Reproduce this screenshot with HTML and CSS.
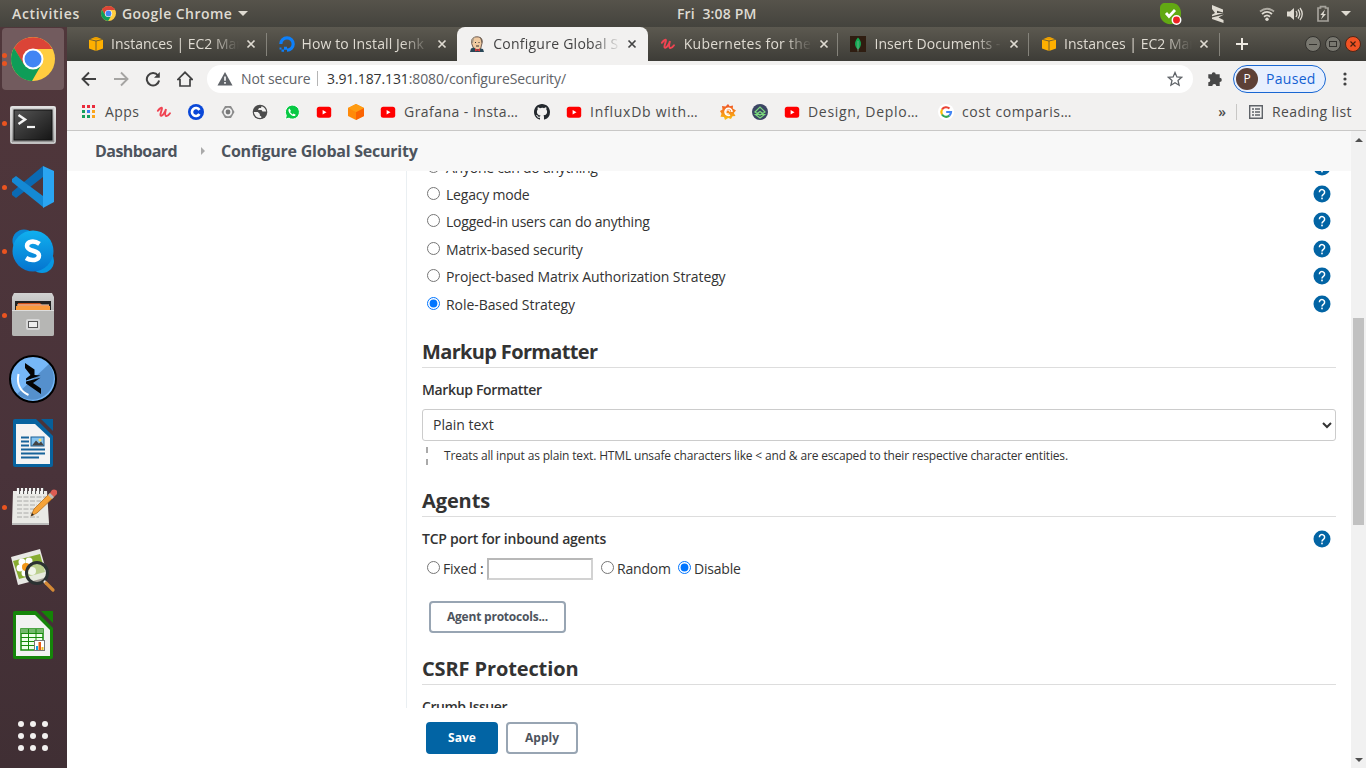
FILE: index.html
```html
<!DOCTYPE html>
<html lang="en">
<head>
<meta charset="utf-8">
<title>Configure Global Security</title>
<link rel="stylesheet" href="styles.css">
</head>
<body>
<svg class="defs" width="0" height="0" aria-hidden="true">
  <defs>
    <linearGradient id="gray" x1="0" y1="0" x2="0" y2="1"><stop offset="0" stop-color="#d2d2d2"/><stop offset="1" stop-color="#8f8f8f"/></linearGradient>
    <linearGradient id="dark" x1="0" y1="0" x2="1" y2="1"><stop offset="0" stop-color="#555"/><stop offset="1" stop-color="#151515"/></linearGradient>
    <linearGradient id="skype" x1="0" y1="0" x2="0" y2="1"><stop offset="0" stop-color="#10b0ef"/><stop offset="1" stop-color="#0574cf"/></linearGradient>
    <linearGradient id="graf" x1="0" y1="0" x2="0" y2="1"><stop offset="0" stop-color="#f04e28"/><stop offset="1" stop-color="#fbc211"/></linearGradient>
    <symbol id="chrome" viewBox="0 0 44 44">
      <circle cx="22" cy="22" r="22" fill="#ffcd40"/>
      <path d="M3 11A22 22 0 0 1 41.300 12H22L12.500 27.500Z" fill="#db4437"/>
      <path d="M3 11A22 22 0 0 0 21 44L30.500 27.500L22 32L13 27.500Z" fill="#0f9d58"/>
      <circle cx="22" cy="22" r="10.500" fill="#fff"/><circle cx="22" cy="22" r="8.500" fill="#4285f4"/>
    </symbol>
    <symbol id="aws" viewBox="0 0 16 16"><path d="M1 3.500L8 1l7 2.500v9L8 15l-7-2.500z" fill="#ffb000"/><path d="M1 3.300L8 5l7-1.700M8 5v10" stroke="#534d3c" stroke-width=".8" fill="none"/><path d="M4 2.300L8 3.500l4-1.200L8 1z" fill="#e79b00"/></symbol>
    <symbol id="udemy" viewBox="0 0 16 16"><path d="M1.800 6.800C3.200 5.200 4.500 3.800 5.600 3.800 7 4 3.800 9.500 4.500 11.300 5.500 13 9 9 10 5c-1 4-1.300 6.500 0 7 1.200.3 2.800-1 4-2.800" stroke="#f04452" stroke-width="1.900" fill="none" stroke-linecap="round"/></symbol>
    <symbol id="yt" viewBox="0 0 16 16"><rect x=".8" y="2.700" width="14.400" height="11" rx="2.500" fill="#f00"/><path d="M6.600 6v4.400L10.500 8.200z" fill="#fff"/></symbol>
    <symbol id="help" viewBox="0 0 18 18"><circle cx="9" cy="9" r="8.500" fill="#0264a4"/><path d="M6.400 7.200a2.600 2.600 0 1 1 4.200 2C9.500 10 9 10.300 9 11.400" stroke="#fff" stroke-width="1.500" fill="none"/><rect x="8.200" y="12.600" width="1.600" height="1.700" fill="#fff"/></symbol>
    <symbol id="x" viewBox="0 0 10 10"><path d="M1.500 1.500l7 7m0-7l-7 7" stroke="currentColor" stroke-width="1.700"/></symbol>
  </defs>
</svg>

<div class="desktop">
  <header class="topbar">
    <span class="activities">Activities</span>
    <svg class="app-icon"><use href="#chrome"/></svg>
    <span class="app-name">Google Chrome</span>
    <i class="caret"></i>
    <span class="clock">Fri&nbsp; 3:08 PM</span>
    <div class="tray">
      <svg width="24" height="24" viewBox="0 0 24 24"><path d="M6 1h7c5 0 9 4 9 10 0 7-4 11-9 11C6 23 1 18 1 12V6c0-3 2-5 5-5z" fill="#62a913"/><path d="M7 11l3 3.500L16 8" stroke="#fff" stroke-width="2.800" fill="none"/><circle cx="17.500" cy="18" r="4.200" fill="#ed2224" stroke="#fff" stroke-width="1.500"/></svg>
      <svg class="tray-z" width="14" height="20" viewBox="0 0 14 20"><path d="M1 1l11 4.500v3L6 6.700v2.300L12.500 9 1 12.200v-1.500l3-1.800L1 5zM13 10.500L7.500 13.500 12.500 16v3L1 15v-1.500z" fill="#dfdbd2"/></svg>
      <svg class="tray-wifi" width="16" height="16" viewBox="0 0 16 16"><g stroke="#dfdbd2" stroke-width="1.800" fill="none"><path d="M1 5.500q7-5.600 14 0" opacity=".65"/><path d="M3 8q5-4.200 10 0M5 10.700q3-2.600 6 0"/></g><circle cx="8" cy="13.200" r="1.700" fill="#dfdbd2"/></svg>
      <svg class="tray-vol" width="16" height="16" viewBox="0 0 16 16"><path d="M0 5.500h3L7 2v12L3 10.500H0z" fill="#dfdbd2"/><path d="M9 5q2 3 0 6M11 3.500q3.500 4.500 0 9M13 2q4.500 6 0 12" stroke="#dfdbd2" stroke-width="1.300" fill="none"/></svg>
      <svg class="tray-bat" width="12" height="18" viewBox="0 0 12 18"><path d="M3.500 3V1.700h5V3H11v13H1V3z" stroke="#a5a29b" stroke-width="1.700" fill="none"/><path d="M8 4.500L3.300 10h2.400L4 14.500 9 9H6.500z" fill="#dfdbd2"/></svg>
      <i class="caret"></i>
    </div>
  </header>

  <div class="workspace">
    <nav class="dock">
      <div class="slot active"><span class="pips two"><i></i><i></i></span><svg width="44" height="44"><use href="#chrome"/></svg></div>
      <div class="slot"><span class="pips"><i></i></span><svg width="46" height="48" viewBox="0 0 46 48"><rect x="0" y="7" width="46" height="38" rx="2" fill="url(#gray)"/><rect x="1" y="8" width="44" height="36" rx="1.500" fill="none" stroke="#f1f1f1"/><rect x="4" y="11" width="38" height="30" fill="url(#dark)" stroke="#111"/><path d="M8.500 16l6.500 4.500-6.500 4.500" stroke="#f4f4f4" stroke-width="2.500" fill="none"/><path d="M17 28h8" stroke="#f4f4f4" stroke-width="2.200"/></svg></div>
      <div class="slot"><span class="pips"><i></i></span><svg width="46" height="48" viewBox="0 0 46 48"><path d="M2 32l4 3L33 14V3L2 29z" fill="#0a6ab3"/><path d="M2 16l4-3 27 20v11L2 19z" fill="#1489d4"/><path d="M33 3l11 5v31l-11 6z" fill="#2aa5f2"/></svg></div>
      <div class="slot"><span class="pips"><i></i></span><svg width="46" height="48" viewBox="0 0 46 48"><circle cx="14" cy="14" r="11.500" fill="#0a87d5"/><circle cx="32" cy="34" r="12" fill="#0797e2"/><circle cx="23" cy="24" r="20.500" fill="url(#skype)"/><path d="M29.500 16.800C24 13 17 14.200 17 19c0 6 12 3.500 12 9.500 0 5-7.500 6-13 2.500" stroke="#fff" stroke-width="4.500" fill="none"/></svg></div>
      <div class="slot"><span class="pips"><i></i></span><svg width="46" height="48" viewBox="0 0 46 48"><path d="M4 2h38l2 4v37q0 2-2 2H4q-2 0-2-2V6z" fill="url(#gray)"/><rect x="5" y="10" width="36" height="10" fill="#222"/><path d="M8 12h22l2 2h7v6H7z" fill="#cf4e17"/><path d="M6 15h34v5H6z" fill="#f99a3c"/><path d="M7 14h32" stroke="#ffe8c8"/><path d="M2 19h42v24q0 2-2 2H4q-2 0-2-2z" fill="#b6b6b4"/><path d="M2 19.500h42" stroke="#ddd"/><rect x="16" y="28" width="14" height="11" rx="2" fill="#d8d8d8"/><rect x="18.500" y="30.500" width="9" height="6" fill="#eee" stroke="#555"/></svg></div>
      <div class="slot"><svg width="48" height="48" viewBox="0 0 48 48"><circle cx="24" cy="24" r="23" fill="#76b7f7"/><path d="M40 9A22 22 0 0 1 8 39z" fill="#5590cd"/><circle cx="24" cy="24" r="23" fill="none" stroke="#000" stroke-width="2"/><path d="M16 8L25.500 14.500V20L31.500 20.500 17 25.500V23.500L21.500 20 16 13zM31.500 22.700L24 28 32 33.500V39L17 28.500V26.500z" fill="#050505"/><path d="M9.500 19q-3 15 10 21" stroke="#fff" stroke-width="2" fill="none"/></svg></div>
      <div class="slot"><svg width="40" height="48" viewBox="0 0 40 48"><path d="M2 0h21l17 17v29q0 2-2 2H2q-2 0-2-2V2q0-2 2-2z" fill="#07639f"/><path d="M28 0h12v12z" fill="#075f99"/><path d="M3 5h19l15 14v26H3z" fill="#f4f4f4"/><path d="M8 18.500h8M8 22.500h8M8 26.500h8M8 30.500h24M8 34.500h24M8 38.500h18" stroke="#17639a" stroke-width="2"/><rect x="18" y="18" width="13" height="9" fill="#85c3ef" stroke="#165f95"/><path d="M19 26.500l4-5 3 3 2-2 3 4z" fill="#444"/><circle cx="27" cy="21" r="1.500" fill="#ffde66"/></svg></div>
      <div class="slot"><span class="pips"><i></i></span><svg width="48" height="48" viewBox="0 0 48 48"><path d="M4 8h34l2 32-37 1z" fill="#e9e9e5"/><path d="M3 40h37v2H3z" fill="#bbb"/><path d="M8 14h29M8 18h24M8 22h20M8 26h22M8 30h16M8 34h22" stroke="#999" stroke-width=".8" stroke-dasharray="5 1.500"/><path d="M9 5v6M13 5v6M17 5v6M21 5v6M25 5v6M29 5v6M33 5v6" stroke="#f5f5f5" stroke-width="2.200"/><path d="M10.500 5v6M14.500 5v6M18.500 5v6M22.500 5v6M26.500 5v6M30.500 5v6M34.500 5v6" stroke="#555"/><path d="M22 33l3-7L41 10l4 4-17 16z" fill="#f6a338" stroke="#a96416" stroke-width=".7"/><path d="M41 10l4 4 3-3q1-3-1-4-2-1-4 0z" fill="#dc5c53"/><path d="M39 12l4 4 2-2-4-4z" fill="#bbb"/><path d="M22 33l1-3 2 2z" fill="#222"/></svg></div>
      <div class="slot"><svg width="48" height="48" viewBox="0 0 48 48"><path d="M2 10L31 2l8 28L9 38z" fill="#e8e8e4"/><path d="M4 14l27-7 5 18-26 7z" fill="#87ac31"/><g fill="#fff"><circle cx="13" cy="15" r="3.500"/><circle cx="20" cy="14" r="3.500"/><circle cx="11" cy="21" r="3.500"/><circle cx="16" cy="26" r="3.500"/><circle cx="23" cy="24" r="4"/></g><circle cx="17" cy="20" r="4" fill="#f29618"/><circle cx="28" cy="26" r="10.500" fill="#e5ecd9" fill-opacity=".55" stroke="#2c3232" stroke-width="3"/><path d="M35 34l2 2" stroke="#eee" stroke-width="2.500"/><path d="M37 36l7 7" stroke="#d48a36" stroke-width="3.200" stroke-linecap="round"/></svg></div>
      <div class="slot"><svg width="40" height="48" viewBox="0 0 40 48"><path d="M2 0h21l17 17v29q0 2-2 2H2q-2 0-2-2V2q0-2 2-2z" fill="#15850a"/><path d="M28 0h12v12z" fill="#148407"/><path d="M3 4h19l15 15v26H3z" fill="#f2f2f2"/><rect x="8" y="18" width="22" height="21" fill="#edffe9" stroke="#168b0b" stroke-width="1.500"/><path d="M8 18h22v4H8z" fill="#73b96c"/><path d="M15.500 18v21M23 18v21M8 22.500h22M8 26.500h22M8 30.500h22M8 34.500h22" stroke="#168b0b"/><rect x="21.500" y="29.500" width="10" height="10" fill="#fff" stroke="#777"/><path d="M23 39v-4h2v4z" fill="#0aa0e5"/><path d="M25.500 39v-8h2.500v8z" fill="#e85a14"/><path d="M28.500 39v-3h2v3z" fill="#e9bc24"/></svg></div>
      <div class="apps-grid"><i></i><i></i><i></i><i></i><i></i><i></i><i></i><i></i><i></i></div>
    </nav>

    <section class="browser">
      <div class="tabs">
        <div class="tab"><svg class="fav"><use href="#aws"/></svg><span class="title ec2">Instances | EC2 Man</span><svg class="close"><use href="#x"/></svg></div>
        <div class="tab nosep"><svg class="fav" viewBox="0 0 16 16"><path d="M1.800 8A6.200 6.200 0 1 1 8 14.200" stroke="#0d80fb" stroke-width="3.200" fill="none"/><path d="M5 10.700h3v3H5zM2.500 13.500h2.500v2.300H2.500zM.5 11.500h2v2h-2z" fill="#0d80fb"/></svg><span class="title how">How to Install Jenk</span><svg class="close"><use href="#x"/></svg></div>
        <div class="tab current nosep"><svg class="fav" viewBox="0 0 16 16"><path d="M3.200 9C1.500 5 3 .8 8 .8s6.300 4.200 4.500 8.200l-1 4.500H5z" fill="#efc9a0" stroke="#4e3931" stroke-width=".8"/><path d="M2.800 7C1.500 3 4 .5 8 .5l-3 2L4 7z" fill="#a89a88"/><path d="M12.800 8c1-4 0-6-2-7l1 3z" fill="#6f6152"/><path d="M1 16l1-3.500 3-1 3 2.500 3-1.500 3 .5 1 3z" fill="#294757"/><path d="M6 12.500l2.500 1.200L11 12.500v3l-2.500-1L6 15.500z" fill="#d6363a"/><path d="M6.500 6v1M10 6v1M7 10h3" stroke="#333"/></svg><span class="title conf">Configure Global S</span><svg class="close"><use href="#x"/></svg></div>
        <div class="tab"><svg class="fav"><use href="#udemy"/></svg><span class="title kub">Kubernetes for the</span><svg class="close"><use href="#x"/></svg></div>
        <div class="tab"><svg class="fav" viewBox="0 0 16 16"><path d="M0 0h16v16H0z" fill="#2f1d11"/><path d="M8 1.500C3.500 6 4.700 11 8 13.500 11.300 11 12.500 6 8 1.500z" fill="#13aa52"/><path d="M8 5v10.500" stroke="#90b29b" stroke-width=".7"/></svg><span class="title ins">Insert Documents -</span><svg class="close"><use href="#x"/></svg></div>
        <div class="tab"><svg class="fav"><use href="#aws"/></svg><span class="title ec2">Instances | EC2 Man</span><svg class="close"><use href="#x"/></svg></div>
        <svg class="newtab" width="12" height="12" viewBox="0 0 12 12"><path d="M6 0v12M0 6h12" stroke="#eeeae2" stroke-width="2"/></svg>
        <div class="winctl">
          <svg viewBox="0 0 16 16"><circle cx="8" cy="8" r="7.500" fill="#797870" stroke="#33322e"/><path d="M4 8.500h8" stroke="#33322e"/></svg>
          <svg viewBox="0 0 16 16"><circle cx="8" cy="8" r="7.500" fill="#797870" stroke="#33322e"/><rect x="4.500" y="5.500" width="7" height="5" fill="none" stroke="#33322e"/></svg>
          <svg viewBox="0 0 16 16"><circle cx="8" cy="8" r="7.500" fill="#f25324" stroke="#4d2719"/><path d="M5.500 5.500l5 5m0-5l-5 5" stroke="#47200f" stroke-width="1.200"/></svg>
        </div>
      </div>

      <div class="toolbar">
        <svg class="nav" viewBox="0 0 16 16"><path d="M15 8H2M8 1.500L1.500 8 8 14.500" stroke="#414141" stroke-width="1.900" fill="none"/></svg>
        <svg class="nav" viewBox="0 0 16 16"><path d="M1 8h13M8 1.500L14.500 8 8 14.500" stroke="#a5a4a2" stroke-width="1.900" fill="none"/></svg>
        <svg class="nav" viewBox="0 0 16 16"><path d="M13 4.500A6.200 6.200 0 1 0 14.100 9.500" stroke="#414141" stroke-width="2" fill="none"/><path d="M14.800 1v5.800H9z" fill="#414141"/></svg>
        <svg class="nav" viewBox="0 0 16 16"><path d="M.8 8.500L8 1.300l7.200 7.200H13V15H3V8.500z" stroke="#414141" stroke-width="1.700" fill="none"/></svg>
        <div class="omnibox">
          <svg width="16" height="14" viewBox="0 0 16 14"><path d="M8 0l7.500 13.500H.5z" fill="#5f6368"/><path d="M8 4.500v4.300M8 10v1.700" stroke="#fff" stroke-width="1.600"/></svg>
          <span class="insecure">Not secure</span><i class="vr"></i>
          <span class="url"><b>3.91.187.131</b>:8080/configureSecurity/</span>
          <svg class="star" viewBox="0 0 16 16"><path d="M8 1.500l1.900 4.400 4.700.4-3.600 3.200 1.100 4.700L8 11.700l-4.100 2.500L5 9.500 1.400 6.300l4.700-.4z" fill="none" stroke="#5f6368" stroke-width="1.300"/></svg>
        </div>
        <svg class="puzzle" viewBox="0 0 16 16"><path d="M4.700 3.300a2 2 0 0 1 4 0h4v3.500a2 2 0 0 1 0 4.200v4H9.300a2 2 0 0 0-4 0H1.300v-3.800a2 2 0 0 0 0-4V3.300z" fill="#474747"/></svg>
        <div class="profile"><span class="avatar">P</span><span class="paused">Paused</span></div>
        <svg class="kebab" viewBox="0 0 4 14"><g fill="#414141"><circle cx="2" cy="2" r="1.600"/><circle cx="2" cy="7" r="1.600"/><circle cx="2" cy="12" r="1.600"/></g></svg>
      </div>

      <div class="bookmarks">
        <div class="bm apps"><svg viewBox="0 0 16 16"><g><path d="M2 1h3v3H2zM7 1h3v3H7zM12 1h3v3h-3z" fill="#ea2b3b"/><path d="M2 6h3v3H2z" fill="#16a05c"/><path d="M7 6h3v3H7z" fill="#3b7ff1"/><path d="M12 6h3v3h-3zM12 11h3v3h-3z" fill="#fba51b"/><path d="M2 11h3v3H2zM7 11h3v3H7z" fill="#16a05c"/></g></svg><span>Apps</span></div>
        <div class="bm"><svg><use href="#udemy"/></svg></div>
        <div class="bm"><svg viewBox="0 0 16 16"><circle cx="8" cy="8" r="8" fill="#0a48d8"/><path d="M11.400 6A4 4 0 1 0 11.400 10" stroke="#fff" stroke-width="2.600" fill="none"/></svg></div>
        <div class="bm"><svg viewBox="0 0 16 16"><path d="M5 2h6l3.500 6-3.500 6H5L1.500 8z" fill="#8b8b8b"/><circle cx="8" cy="8" r="3.300" fill="#777" stroke="#eee" stroke-width="1.800"/></svg></div>
        <div class="bm"><svg viewBox="0 0 16 16"><circle cx="8" cy="8" r="7.300" fill="#4b4b4b"/><path d="M1.800 8h4l2 2v1.500l1.500 1V14A6.500 6.500 0 0 1 1.800 8zM9.500 2.200L9 4H7L6 6h3.500l1 1.500h3.700A6.500 6.500 0 0 0 9.500 2.200z" fill="#f2f1f0"/></svg></div>
        <div class="bm"><svg viewBox="0 0 16 16"><path d="M1.300 15.200l1-3.700A7 7 0 1 1 5 14.200z" fill="#08c944" stroke="#fff"/><path d="M5.500 4.500L7 7 6 8l2.500 2.500 1-1 2.200 1.300c-.5 2-3 1.500-5-.3S3.500 5.500 5.500 4.500z" fill="#fff"/></svg></div>
        <div class="bm"><svg><use href="#yt"/></svg></div>
        <div class="bm"><svg viewBox="0 0 16 16"><path d="M0 4l8-4 8 4v8l-8 4-8-4z" fill="#ff8a0a"/><path d="M8 8v8l8-4V4z" fill="#fb6404"/><path d="M0 4l8-4 8 4-8 4z" fill="#ff9c12"/></svg></div>
        <div class="bm text"><svg><use href="#yt"/></svg><span class="gi">Grafana - Insta…</span></div>
        <div class="bm"><svg viewBox="0 0 16 16"><path fill="#24292e" d="M8 0C3.580 0 0 3.580 0 8c0 3.540 2.290 6.530 5.470 7.590.4.070.55-.17.55-.38 0-.19-.01-.82-.01-1.490-2.010.37-2.530-.49-2.690-.94-.09-.23-.48-.94-.82-1.130-.28-.15-.68-.52-.01-.53.63-.01 1.080.58 1.230.82.72 1.210 1.870.87 2.330.66.07-.52.28-.87.51-1.070-1.780-.2-3.640-.89-3.640-3.950 0-.87.31-1.590.82-2.150-.08-.2-.36-1.020.08-2.120 0 0 .67-.21 2.200.82A7.400 7.400 0 0 1 8 3.860c.68 0 1.360.09 2 .27 1.530-1.040 2.200-.82 2.200-.82.44 1.100.16 1.920.08 2.120.51.560.82 1.270.82 2.150 0 3.070-1.870 3.750-3.650 3.950.29.25.54.73.54 1.480 0 1.070-.01 1.930-.01 2.200 0 .21.15.46.55.38A8 8 0 0 0 16 8c0-4.420-3.580-8-8-8z"/></svg></div>
        <div class="bm text"><svg><use href="#yt"/></svg><span class="inf">InfluxDb with…</span></div>
        <div class="bm"><svg viewBox="0 0 16 16"><path d="M8 0l1.700 2.300L13 1.500l-.2 3L16 6.500 13.800 9l1.700 3-3 .2L11 15l-2.800-1L5 16l-1-3-3.500-.2 1-3L0 7l2.500-1.500L2 2l3.500.5z" fill="url(#graf)"/><path d="M12 8A3.500 3.500 0 1 0 10 11" stroke="#fff" stroke-width="1.600" fill="none"/><path d="M10 8a2 2 0 1 0-1.200 1.800" fill="none" stroke="#fff"/></svg></div>
        <div class="bm"><svg viewBox="0 0 16 16"><circle cx="8" cy="8" r="8" fill="#3c4664"/><path d="M3 8L8 3l5 5-2.200 1.500L8 7.500 5.200 9.500zM3.500 10.500h9L8 14zM5.200 9.500L8 11l2.800-1.500" stroke="#7bdb7d" stroke-width="1.200" fill="none"/></svg></div>
        <div class="bm text"><svg><use href="#yt"/></svg><span class="dd">Design, Deplo…</span></div>
        <div class="bm text"><svg viewBox="0 0 16 16"><circle cx="8" cy="8" r="8" fill="#fff"/><g fill="none" stroke-width="2.200"><path d="M4 5.500A5 5 0 0 1 11.500 4.500" stroke="#ea4335"/><path d="M4 5.500A5 5 0 0 0 4 10.500" stroke="#fbbc05"/><path d="M4 10.500A5 5 0 0 0 11.300 11.700" stroke="#34a853"/><path d="M11.300 11.700A5 5 0 0 0 13 8H8.200" stroke="#4285f4"/></g></svg><span class="cc">cost comparis…</span></div>
        <span class="more">»</span><i class="bmsep"></i>
        <svg class="rl" viewBox="0 0 16 16"><path d="M1.700 1.700h12.600v12.600H1.700z" fill="none" stroke="#5f6368" stroke-width="1.400"/><path d="M4 5h2M4 8h2M4 11h2M7 5h5M7 8h5M7 11h5" stroke="#5f6368" stroke-width="1.400"/></svg>
        <span class="reading">Reading list</span>
      </div>

      <div class="viewport">
        <main class="page">
          <div class="crumbs"><span class="c1">Dashboard</span><i></i><span class="c2">Configure Global Security</span></div>
          <div class="columns">
            <aside class="side"></aside>
            <form class="form">
              <div class="strategies">
                <label><input type="radio" name="s"><span class="t1">Anyone can do anything</span><svg><use href="#help"/></svg></label>
                <label><input type="radio" name="s"><span class="t2">Legacy mode</span><svg><use href="#help"/></svg></label>
                <label><input type="radio" name="s"><span class="t3">Logged-in users can do anything</span><svg><use href="#help"/></svg></label>
                <label><input type="radio" name="s"><span class="t4">Matrix-based security</span><svg><use href="#help"/></svg></label>
                <label><input type="radio" name="s"><span class="t5">Project-based Matrix Authorization Strategy</span><svg><use href="#help"/></svg></label>
                <label><input type="radio" name="s" checked><span class="t6">Role-Based Strategy</span><svg><use href="#help"/></svg></label>
              </div>
              <h2 class="h-markup">Markup Formatter</h2>
              <h3 class="l-markup">Markup Formatter</h3>
              <select><option>Plain text</option></select>
              <p class="note">Treats all input as plain text. HTML unsafe characters like &lt; and &amp; are escaped to their respective character entities.</p>
              <h2 class="h-agents">Agents</h2>
              <h3 class="l-tcp"><span>TCP port for inbound agents</span><svg><use href="#help"/></svg></h3>
              <div class="ports">
                <label class="p1"><input type="radio" name="p"><span>Fixed :</span></label><input class="port" type="text">
                <label class="p2"><input type="radio" name="p"><span>Random</span></label>
                <label class="p3"><input type="radio" name="p" checked><span>Disable</span></label>
              </div>
              <button type="button" class="btn protocols"><span>Agent protocols...</span></button>
              <h2 class="h-csrf">CSRF Protection</h2>
              <h3 class="l-crumb">Crumb Issuer</h3>
            </form>
          </div>
          <div class="actions"><button type="button" class="btn primary">Save</button><button type="button" class="btn apply">Apply</button></div>
        </main>
        <div class="scroll"><i class="up"></i><i class="thumb"></i><i class="down"></i></div>
      </div>
    </section>
  </div>
</div>
</body>
</html>
```
FILE: styles.css
```css
* { box-sizing: border-box; }
body { margin: 0; font-family: "Open Sans", "Noto Sans", sans-serif; overflow: hidden; }
.defs { position: absolute; }
svg { display: block; flex: none; }
i { display: block; flex: none; }
span { white-space: nowrap; }
.desktop { width: 1366px; height: 768px; display: flex; flex-direction: column; }

.topbar { height: 27px; flex: none; display: flex; align-items: center; background: linear-gradient(#56534b, #44433d); color: #dfdbd2; font-size: 14px; font-weight: 600; padding-left: 12px; line-height: 26px; }
.activities { width: 89px; letter-spacing: .65px; }
.app-icon { width: 15px; height: 15px; margin-right: 6px; }
.app-name { width: 111px; letter-spacing: .45px; }
.caret { border: 5px solid transparent; border-top-color: #dfdbd2; border-bottom: 0; margin-left: 5px; }
.clock { margin-left: 429px; width: 80px; letter-spacing: .15px; }
.tray { margin-left: auto; display: flex; align-items: center; padding-right: 15px; }
.tray-z { margin-left: 28px; }
.tray-wifi { margin-left: 34px; }
.tray-vol { margin-left: 12px; }
.tray-bat { margin-left: 14px; }
.tray .caret { margin-left: 12px; }

.workspace { flex: 1; display: flex; min-height: 0; }
.dock { width: 67px; flex: none; background: linear-gradient(#50373b, #49333a 60%, #402f34); display: flex; flex-direction: column; padding-top: 1px; }
.slot { height: 64px; width: 66px; flex: none; display: grid; place-items: center; position: relative; }
.slot.active { width: 62px; height: 62px; margin: 0 0 1px 2px; border-radius: 4px; background: #725b5e; }
.pips { position: absolute; left: 2px; top: 0; height: 64px; display: flex; flex-direction: column; justify-content: center; gap: 3px; }
.active .pips { left: 0; height: 62px; }
.pips i { width: 5px; height: 5px; border-radius: 50%; background: #e95420; }
.apps-grid { display: grid; grid-template-columns: repeat(3, 6px); gap: 6px; margin: 54px 0 0 18px; }
.apps-grid i { width: 6px; height: 6px; border-radius: 50%; background: #f2f0ef; }

.browser { flex: 1; min-width: 0; display: flex; flex-direction: column; }
.tabs { height: 34px; flex: none; display: flex; align-items: center; padding-left: 9px; background: linear-gradient(#5c5950, #3d3c37); }
.tab { width: 190.600px; height: 34px; flex: none; display: flex; align-items: center; padding-left: 12px; color: #dfdbd2; border-right: 1px solid transparent; border-image: linear-gradient(transparent 20%, #85837b 20% 82%, transparent 82%) 1; }
.tab.nosep { border-image: none; }
.tab.current { background: #f2f1f0; color: #444; border-radius: 8px 8px 0 0; border: 0; }
.fav { width: 16px; height: 16px; }
.title { width: 128px; margin-left: 7px; font-size: 14px; padding-bottom: 1px; -webkit-mask-image: linear-gradient(90deg, #000 100px, transparent 128px); mask-image: linear-gradient(90deg, #000 100px, transparent 128px); }
.how { letter-spacing: .1px; }
.conf { letter-spacing: .25px; margin-left: 8px; width: 127px; }
.kub { letter-spacing: .25px; margin-left: 8px; width: 128px; }
.ins { letter-spacing: .1px; margin-left: 8px; width: 128px; }
.close { width: 10px; height: 10px; margin-left: 7px; }
.newtab { margin-left: 16px; }
.winctl { display: flex; gap: 4px; margin-left: auto; padding-right: 5px; }
.winctl svg { width: 16px; height: 16px; }

.toolbar { height: 36px; flex: none; display: flex; align-items: center; background: #f2f1f0; padding-left: 14px; font-size: 14px; }
.nav { width: 16px; height: 16px; margin-right: 16px; }
.omnibox { width: 986px; height: 28px; margin-left: -2px; border-radius: 14px; background: #fff; display: flex; align-items: center; padding: 0 10px 1px; color: #5f6368; }
.insecure { margin-left: 8px; width: 69px; letter-spacing: -.15px; }
.vr { width: 1px; height: 15px; background: #b5b5b5; margin: 0 9px 0 7px; }
.url { letter-spacing: -.11px; }
.url b { color: #333; font-weight: 400; }
.star { width: 16px; height: 16px; margin-left: auto; }
.puzzle { width: 16px; height: 16px; margin-left: 14px; }
.profile { width: 93px; height: 28px; margin-left: 10px; border: 1px solid #1967d2; border-radius: 14px; background: #e8f0fe; color: #1260d3; display: flex; align-items: center; padding: 0 0 1px 2px; }
.avatar { width: 22px; height: 22px; border-radius: 50%; background: #5d4037; color: #fff; font-size: 12px; line-height: 22px; text-align: center; }
.paused { margin-left: 8px; letter-spacing: .3px; }
.kebab { width: 4px; height: 14px; margin-left: 17px; }

.bookmarks { height: 34px; flex: none; display: flex; align-items: center; gap: 16px; background: #f2f1f0; padding: 0 14px 4px 13px; border-bottom: 1px solid #c9c8c7; font-size: 14px; color: #4c4c4c; }
.bm { display: flex; gap: 8px; flex: none; }
.bm svg { width: 16px; height: 16px; }
.bm span { width: 114px; line-height: 16px; }
.bm.apps { gap: 9px; }
.bm.apps span { width: 35px; letter-spacing: .4px; }
.bm .gi { letter-spacing: .45px; }
.bm .inf { letter-spacing: .75px; }
.bm .dd { letter-spacing: .7px; }
.bm .cc { letter-spacing: .6px; }
.more { margin-left: auto; font-weight: 600; }
.bmsep { width: 1px; height: 16px; background: #c8c7c5; margin: 0 -5px 0 -6px; }
.rl { width: 16px; height: 16px; }
.reading { width: 80px; margin-left: -8px; letter-spacing: .42px; }

.viewport { flex: 1; display: flex; min-height: 0; }
.page { flex: 1; min-width: 0; background: #fff; display: flex; flex-direction: column; }
.crumbs { height: 40px; flex: none; background: #f8f8f8; display: flex; align-items: center; padding-left: 28px; font-size: 16px; font-weight: 700; color: #4d545d; }
.crumbs i { border: 4px solid transparent; border-left-color: #aaa; border-right: 0; margin: 0 16px 0 24px; }
.c1 { width: 82px; letter-spacing: -.55px; }
.c2 { letter-spacing: -.24px; }
.columns { flex: 1; min-height: 0; display: flex; overflow: hidden; }
.side { width: 340px; flex: none; border-right: 1px solid #eaeff2; }
.form { flex: 1; min-width: 0; padding: 0 15px; color: #333; font-size: 14px; }
.strategies { margin-top: -17.500px; padding-left: 5px; }
.strategies label { height: 27.400px; display: flex; align-items: center; }
.strategies span { margin-left: 6px; }
.strategies input, .ports input[type=radio] { width: 13px; height: 13px; margin: 0; flex: none; position: relative; top: -1px; }
.strategies svg, h3 svg { width: 18px; height: 18px; margin-left: auto; margin-right: 5px; }
.strategies svg { margin-bottom: 1px; }
.t1 { letter-spacing: -.24px; }
.t2 { letter-spacing: -.2px; }
.t3 { letter-spacing: -.23px; }
.t4 { letter-spacing: -.19px; }
.t5 { letter-spacing: -.12px; }
.t6 { letter-spacing: -.06px; }
h2 { margin: 0; font-size: 20px; line-height: 31px; height: 32px; border-bottom: 1px solid #ddd; font-weight: 700; white-space: nowrap; }
h3 { margin: 0; font-size: 14px; line-height: 20px; font-weight: 600; white-space: nowrap; display: flex; align-items: center; }
.h-markup { margin-top: 18px; letter-spacing: -.65px; }
.l-markup { margin-top: 12px; letter-spacing: -.34px; }
select { display: block; width: 100%; height: 32px; margin-top: 9px; padding: 0 6px; border: 1px solid #ccc; border-radius: 3px; background: #fff; color: #333; font: 14px "Open Sans", sans-serif; }
.note { margin: 6px 0 0 4px; padding-left: 16px; height: 18px; border-left: 2px dashed #aaa; font-size: 12px; line-height: 18px; white-space: nowrap; letter-spacing: -.16px; }
.h-agents { margin-top: 20px; letter-spacing: -.1px; }
.l-tcp { margin-top: 12px; letter-spacing: -.23px; }
.ports { display: flex; align-items: center; margin-top: 9px; height: 22px; padding-left: 5px; letter-spacing: -.2px; }
.ports label { display: flex; align-items: center; flex: none; }
.ports span { margin-left: 3px; }
.p1 { width: 60px; }
.port { width: 106px; height: 22px; border: 2px solid #d2d2d2; border-top-color: #b8b8b8; border-left-color: #b8b8b8; margin: 0 8px 0 0; }
.p2 { width: 77px; }
.btn { display: block; height: 32px; border: 2px solid #98a5b3; border-radius: 4px; background: #fff; color: #4d545d; font: 700 12px "Open Sans", sans-serif; padding: 0; white-space: nowrap; }
.protocols { width: 137px; margin: 21px 0 0 7px; letter-spacing: -.22px; }
.h-csrf { margin-top: 20px; letter-spacing: -.12px; }
.l-crumb { margin-top: 12px; letter-spacing: -.45px; }
.actions { height: 60px; flex: none; padding: 14px 0 0 359px; display: flex; gap: 8px; background: #fff; }
.actions .btn { width: 72px; padding-bottom: 2px; }
.primary { background: #0264a4; border-color: #0264a4; color: #fff; }
.scroll { width: 15px; flex: none; background: #f1f1f1; display: flex; flex-direction: column; align-items: center; }
.up { border: 4px solid transparent; border-bottom-color: #505050; border-top: 0; margin-top: 7px; }
.thumb { width: 11px; height: 207px; background: #c1c1c1; margin-top: 176px; }
.down { border: 4px solid transparent; border-top-color: #505050; border-bottom: 0; margin: auto 0 6px; }
```
